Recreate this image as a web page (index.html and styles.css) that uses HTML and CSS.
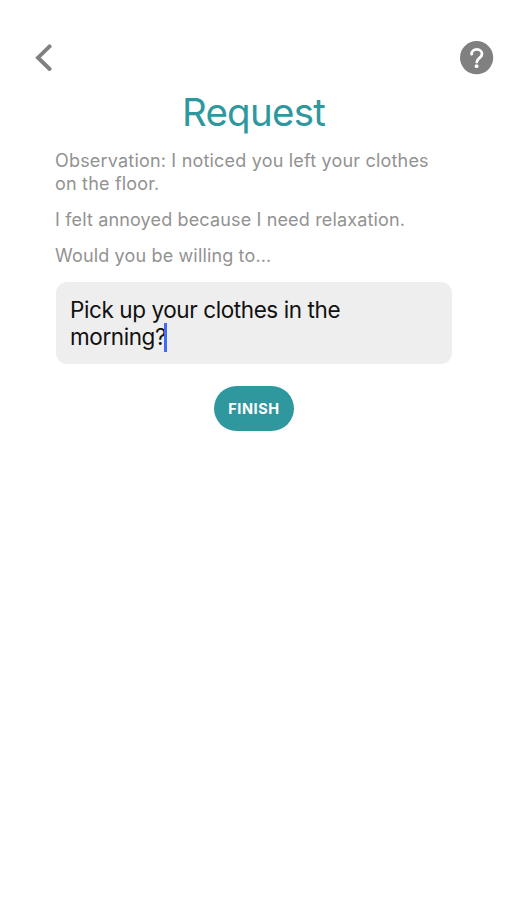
FILE: index.html
```html
<!DOCTYPE html>
<html lang="en">
<head>
<meta charset="utf-8">
<title>Request</title>
<link rel="stylesheet" href="styles.css">
</head>
<body>
<header class="bar">
<svg class="back" viewBox="0 0 18 28" width="18" height="28" aria-hidden="true"><path d="M15.6 2.4 4 13.7 15.6 25"/></svg>
<svg class="help" viewBox="0 0 34 34" width="34" height="34" aria-hidden="true"><circle cx="16.6" cy="16.7" r="16.6"/><path d="M11.6 13.2c0-3 2.2-4.8 5.2-4.8s5.2 1.9 5.2 4.6c0 4-5.2 4.3-5.2 8"/><circle class="dot" cx="16.6" cy="25.2" r="1.9"/></svg>
</header>
<main class="content">
<h1>Request</h1>
<p class="observation">Observation: I noticed you left your clothes<br>on the floor.</p>
<p>I felt annoyed because I need relaxation.</p>
<p>Would you be willing to...</p>
<div class="field">Pick up your clothes in the<br>morning?<i class="caret"></i></div>
<button class="finish">FINISH</button>
</main>
</body>
</html>
```
FILE: styles.css
```css
* { box-sizing: border-box; }
body { margin: 0; height: 900px; background: #fff; font-family: Inter, "Liberation Sans", sans-serif; overflow: hidden; }
.bar { display: flex; justify-content: space-between; align-items: center; height: 92px; padding: 24px 13px 0 34px; }
.back { fill: none; stroke: #808080; stroke-width: 3.9; stroke-linecap: round; }
.help circle { fill: #808080; }
.help path { fill: none; stroke: #fff; stroke-width: 2.8; stroke-linecap: round; }
.help .dot { fill: #fff; }
.content { display: flex; flex-direction: column; padding: 0 55px; }
h1 { margin: 0; height: 57px; line-height: 41px; text-align: center; font-size: 38.5px; font-weight: 400; letter-spacing: -0.75px; color: #2f989f; }
p { margin: 0 0 13px; font-size: 18px; line-height: 23px; letter-spacing: 0.15px; color: #929292; white-space: nowrap; }
.observation { letter-spacing: 0.19px; }
.field { height: 82px; margin: 2px 0 0 1px; padding: 14px; border-radius: 11px; background: #eee; color: #111; font-size: 22.5px; line-height: 27px; letter-spacing: -0.41px; white-space: nowrap; }
.caret { display: inline-block; width: 2.5px; height: 29px; margin: -4px 0 -4px -2px; vertical-align: -6px; background: #426bf2; position: relative; top: -3px; }
.finish { align-self: center; margin: 22px 0 0 1px; width: 80px; height: 45px; padding: 0; border: 0; border-radius: 23px; background: #2f989f; color: #fff; font: 700 14.5px Inter, sans-serif; letter-spacing: 0.6px; }
```
